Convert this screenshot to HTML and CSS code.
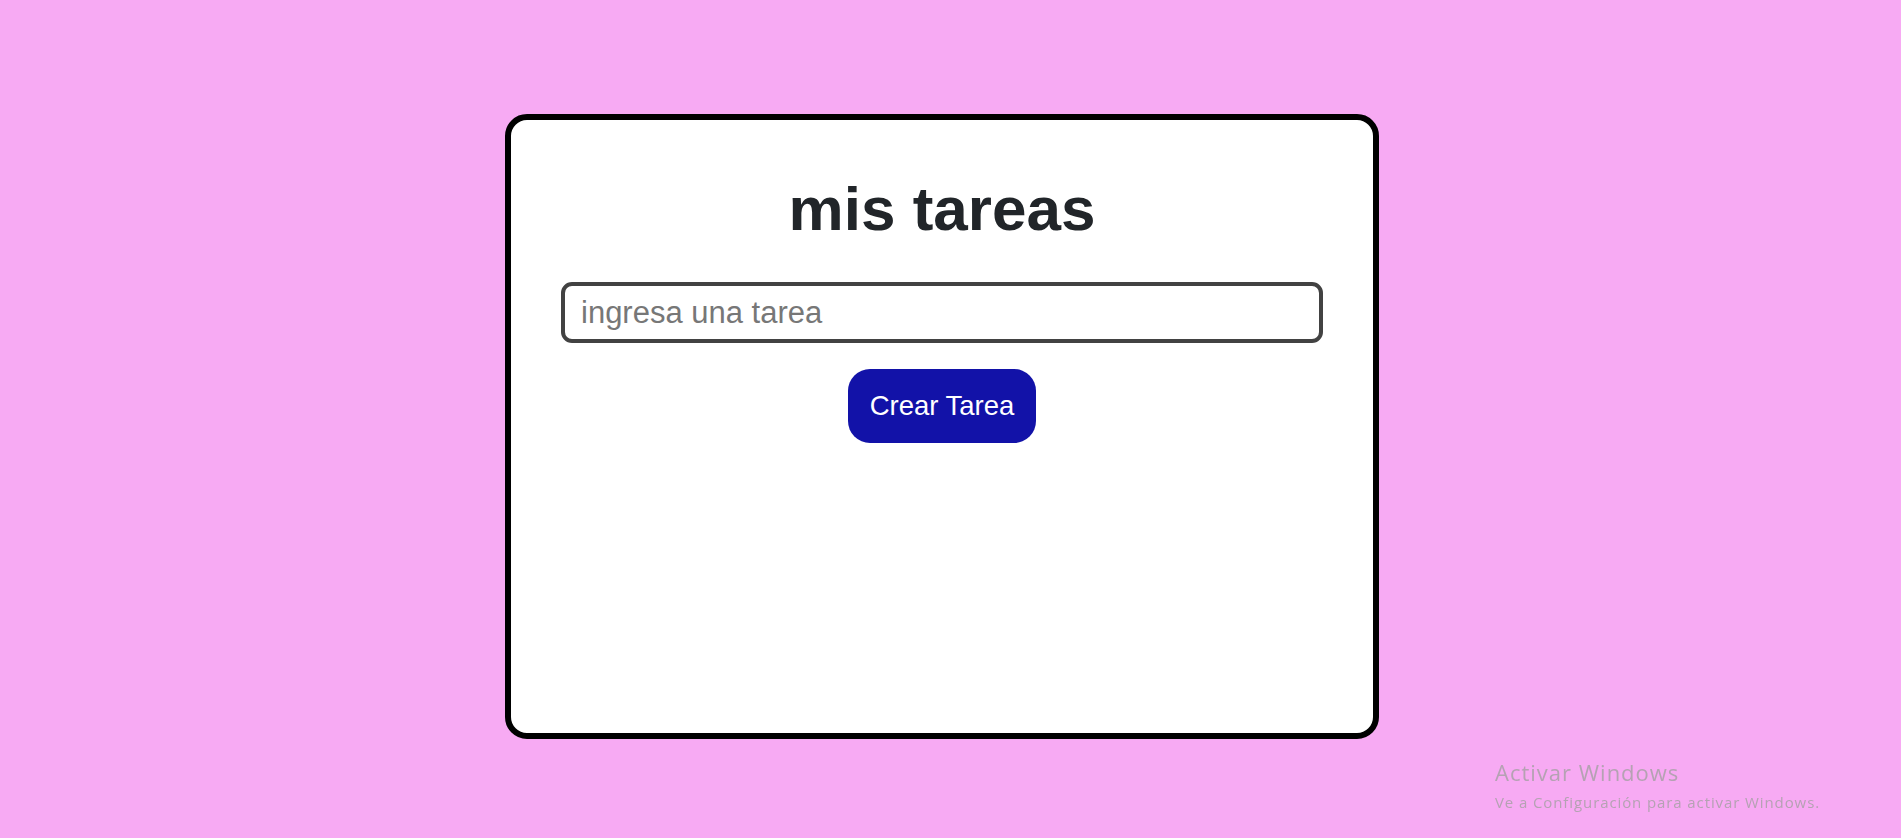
FILE: index.html
```html
<!DOCTYPE html>
<html lang="es">
<head>
<meta charset="utf-8">
<title>mis tareas</title>
<link rel="stylesheet" href="styles.css">
</head>
<body>
<main class="page">
  <section class="card">
    <h1 class="title">mis tareas</h1>
    <input class="task-input" type="text" placeholder="ingresa una tarea">
    <button class="create-btn" type="button">Crear Tarea</button>
  </section>
</main>
<div class="activate">
  <div class="activate-title">Activar Windows</div>
  <div class="activate-sub">Ve a Configuración para activar Windows.</div>
</div>
</body>
</html>
```

FILE: styles.css
```css
html, body {
  margin: 0;
  padding: 0;
  height: 100%;
  background: #f7aaf3;
  font-family: "Liberation Sans", Arial, sans-serif;
  overflow: hidden;
}

.page {
  display: flex;
  justify-content: center;
  padding: 114px 17px 0 0;
}

.card {
  box-sizing: border-box;
  width: 874px;
  height: 625px;
  background: #ffffff;
  border: 6px solid #000000;
  border-radius: 22px;
  padding: 54px 50px 0;
  display: flex;
  flex-direction: column;
  align-items: center;
}

.title {
  margin: 0;
  font-size: 62px;
  font-weight: 700;
  line-height: 70px;
  color: #212529;
}

.task-input {
  box-sizing: border-box;
  width: 100%;
  height: 61px;
  margin-top: 38px;
  border: 4px solid #424242;
  border-radius: 11px;
  padding: 0 16px 0 16px;
  font-family: "Liberation Sans", Arial, sans-serif;
  font-size: 31px;
  color: #212529;
  background: #ffffff;
  outline: none;
}

.task-input::placeholder {
  color: #777777;
}

.create-btn {
  margin-top: 26px;
  height: 74px;
  padding: 0 22px;
  border: none;
  border-radius: 22px;
  background: #1212a8;
  color: #ffffff;
  font-family: "Liberation Sans", Arial, sans-serif;
  font-size: 27.5px;
}

.activate {
  position: fixed;
  left: 1495px;
  top: 758px;
  font-family: "Open Sans", "Noto Sans", sans-serif;
  color: #b5a2b3;
}

.activate-title {
  font-size: 22px;
  line-height: 28px;
  letter-spacing: 1px;
}

.activate-sub {
  font-size: 15px;
  line-height: 20px;
  letter-spacing: 0.9px;
  margin-top: 6px;
}
```
